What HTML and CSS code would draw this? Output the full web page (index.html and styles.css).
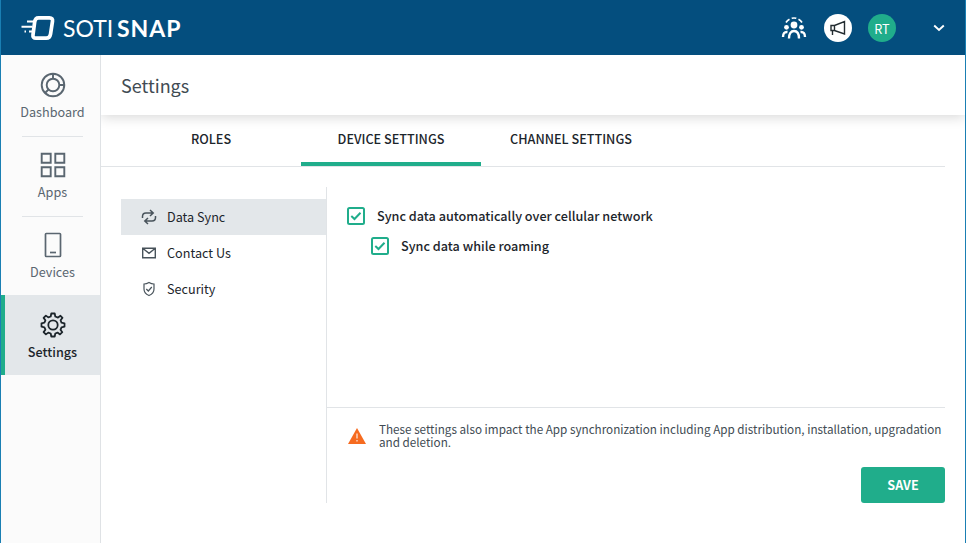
FILE: index.html
```html
<!DOCTYPE html>
<html lang="en">
<head>
<meta charset="utf-8">
<title>SOTI Snap – Settings</title>
<link rel="stylesheet" href="styles.css">
</head>
<body>
<div class="app">
  <header class="topbar">
    <div class="brand">
      <svg class="brand-mark" width="34" height="26" viewBox="0 0 34 26" fill="none" stroke="#fff">
        <path d="M17.500 2.800H28.500Q32 2.800 31.500 6.300L29.500 19.200Q28.800 23.200 25.300 23.200H15Q11.500 23.200 12 19.700L13.700 6.800Q14.200 2.800 17.500 2.800Z" stroke-width="3.700"/>
        <path d="M6 6.500H13M0.500 11.700H11.500M3.500 16.500H5M8 16.500H12" stroke-width="1.900"/>
      </svg>
      <span class="brand-thin">SOTI</span><span class="brand-bold">SNAP</span>
    </div>
    <div class="tools">
      <svg class="people" width="26" height="24" viewBox="0 0 26 24" fill="none" stroke="#fff">
        <path d="M5 6.500A9.200 9.200 0 0 1 8.500 3.300M10.700 2.300A9 9 0 0 1 15.300 2.300M17.500 3.300A9.200 9.200 0 0 1 21 6.500" stroke-width="1.700"/>
        <circle cx="13" cy="9" r="3.400" fill="#fff" stroke="none"/><circle cx="5.500" cy="11.300" r="2.400" fill="#fff" stroke="none"/><circle cx="20.500" cy="11.300" r="2.400" fill="#fff" stroke="none"/>
        <path d="M8 22.500C8 17.500 10 15 13 15S18 17.500 18 22.500M2 21C2 17.500 3.500 15.600 6.500 16M24 21C24 17.500 22.500 15.600 19.500 16" stroke-width="2.400"/>
      </svg>
      <span class="round announce"><svg width="16" height="16" viewBox="0 0 16 16" fill="none" stroke="#222b30" stroke-width="1.400"><path d="M1 5.500H4.500L14.500 1.500V14L4.500 10.500H1ZM4.500 5.500V10.500M2.500 10.500V15"/></svg></span>
      <span class="round avatar">RT</span>
      <svg class="chevron" width="12" height="8" viewBox="0 0 12 8" fill="none" stroke="#fff" stroke-width="1.900"><path d="M1.200 1.500L6 6L10.800 1.500"/></svg>
    </div>
  </header>
  <div class="body">
    <nav class="rail">
      <a class="rail-item"><svg width="26" height="26" viewBox="0 0 26 26" fill="none" stroke="#5a6670" stroke-width="1.900"><circle cx="13" cy="13" r="11.300"/><circle cx="13" cy="13" r="6.300"/><path d="M13 1.700V6.700M19.300 13H24.300M8.500 17.500L5 21"/></svg><span>Dashboard</span></a>
      <a class="rail-item"><svg width="26" height="26" viewBox="0 0 26 26" fill="none" stroke="#5a6670" stroke-width="1.900"><path d="M1.700 1.700H10.700V10.700H1.700ZM15.300 1.700H24.300V10.700H15.300ZM1.700 15.300H10.700V24.300H1.700ZM15.300 15.300H24.300V24.300H15.300Z"/></svg><span>Apps</span></a>
      <a class="rail-item"><svg width="26" height="26" viewBox="0 0 26 26" fill="none" stroke="#5a6670" stroke-width="1.700"><rect x="5.500" y="1.500" width="15" height="23" rx=".8"/><path d="M10 20.500H16"/></svg><span>Devices</span></a>
      <a class="rail-item active"><svg width="26" height="26" viewBox="0 0 26 26" fill="none" stroke="#1c252b" stroke-width="1.800" stroke-linejoin="round"><circle cx="13" cy="13" r="4.700"/><path d="M11.300 1.500H14.700L15.300 4.500L18 5.600L20.500 3.800L22.500 5.800L20.600 8.300L21.500 10.700L24.500 11.300V14.700L21.500 15.300L20.500 17.800L22.300 20.200L20 22.400L17.500 20.600L15.300 21.500L14.700 24.500H11.300L10.700 21.500L8.300 20.600L5.900 22.400L3.600 20.100L5.400 17.700L4.400 15.300L1.500 14.700V11.300L4.400 10.700L5.400 8.300L3.600 5.900L5.900 3.600L8.300 5.400L10.700 4.500Z"/></svg><span>Settings</span></a>
    </nav>
    <main class="main">
      <h1 class="title">Settings</h1>
      <div class="tabs"><a class="tab">ROLES</a><a class="tab selected">DEVICE SETTINGS</a><a class="tab">CHANNEL SETTINGS</a></div>
      <div class="content">
        <div class="submenu">
          <a class="sub current"><svg width="16" height="16" viewBox="0 0 16 16" fill="none" stroke="#48535b" stroke-width="1.500"><path d="M1.500 9V7.500Q1.500 4 5 4H11.500M9 1L12.200 4L9 7M14.500 7V8.500Q14.500 12 11 12H4.500M7 9L3.800 12L7 15"/></svg><span>Data Sync</span></a>
          <a class="sub"><svg width="16" height="16" viewBox="0 0 16 16" fill="none" stroke="#48535b" stroke-width="1.400"><path d="M1.700 3.200H14.300V12.800H1.700ZM2 3.500L8 8.300L14 3.500"/></svg><span>Contact Us</span></a>
          <a class="sub"><svg width="16" height="16" viewBox="0 0 16 16" fill="none" stroke="#48535b" stroke-width="1.200"><path d="M8 1.500Q10.500 3 13 3V8Q13 12.500 8 14.500Q3 12.500 3 8V3Q5.500 3 8 1.500ZM5.300 8L7.300 10L10.800 6"/></svg><span>Security</span></a>
        </div>
        <div class="panel">
          <div class="options">
            <label class="option"><svg width="18" height="18" viewBox="0 0 18 18" fill="none" stroke="#20ad8b" stroke-width="2"><rect x="1" y="1" width="16" height="16" rx="1.500"/><path d="M4.300 9L7.500 12L13.500 5.800"/></svg><span>Sync data automatically over cellular network</span></label>
            <label class="option child"><svg width="18" height="18" viewBox="0 0 18 18" fill="none" stroke="#20ad8b" stroke-width="2"><rect x="1" y="1" width="16" height="16" rx="1.500"/><path d="M4.300 9L7.500 12L13.500 5.800"/></svg><span>Sync data while roaming</span></label>
          </div>
          <div class="notice"><svg width="18" height="16" viewBox="0 0 18 16"><path d="M9 0L18 16H0Z" fill="#f66b20"/><path d="M9 5.500V10.500M9 12V13.500" stroke="#fbd3bd" stroke-width="1.500"/></svg><p>These settings also impact the App synchronization including App distribution, installation, upgradation<br>and deletion.</p></div>
          <button class="save">SAVE</button>
        </div>
      </div>
    </main>
  </div>
</div>
</body>
</html>
```
FILE: styles.css
```css
* { box-sizing: border-box; }
body { margin: 0; font-family: "Noto Sans CJK SC", "Noto Sans", sans-serif; font-size: 12.65px; color: #1c252b; background: #fff; }
svg { flex: none; display: block; }
.app { width: 966px; height: 543px; border: solid #1a7fb3; border-width: 0 1px; display: flex; flex-direction: column; overflow: hidden; }
.topbar { height: 55px; flex: none; background: #044e7e; color: #fff; display: flex; justify-content: space-between; align-items: center; padding: 0 20px; }
.brand { display: flex; align-items: center; font-family: Lato, sans-serif; font-size: 23px; line-height: 26px; }
.brand-mark { margin-right: 8px; }
.brand-thin { font-weight: 400; width: 54px; letter-spacing: 0; }
.brand-bold { font-weight: 700; letter-spacing: 1px; }
.tools { display: flex; align-items: center; }
.people { margin-right: 17px; }
.round { width: 28px; height: 28px; border-radius: 50%; display: flex; align-items: center; justify-content: center; margin-right: 16px; }
.announce { background: #fff; }
.avatar { background: #20ad8b; margin-right: 37px; padding-top: 1px; }
.body { flex: 1; display: flex; min-height: 0; }
.rail { width: 100px; flex: none; background: #fbfbfb; border-right: 1px solid #dfe2e5; padding-top: 2px; }
.rail-item { height: 80px; display: flex; flex-direction: column; align-items: center; padding: 15px 0 0 4px; color: #5a6670; background: linear-gradient(#e1e4e7, #e1e4e7) 21px 100% / 61px 1px no-repeat; }
.rail-item span { line-height: 20px; margin-top: 4px; }
.rail-item:nth-child(3) { background: none; height: 78px; }
.rail-item.active { background: #e3e7ea; border-left: 4px solid #20ad8b; padding: 17px 0 0; color: #1c252b; font-weight: 500; }
.main { flex: 1; min-width: 0; display: flex; flex-direction: column; }
.title { margin: 0; height: 60px; flex: none; padding: 0 20px; font-size: 18px; font-weight: 400; line-height: 60px; color: #414b53; box-shadow: 0 2px 12px rgba(0,0,0,.16); clip-path: inset(0 0 -20px 0); }
.tabs { height: 52px; flex: none; margin-right: 20px; padding-left: 20px; border-bottom: 1px solid #e1e4e7; display: flex; }
.tab { width: 180px; height: 51px; text-align: center; line-height: 48px; font-weight: 500; }
.tab.selected { border-bottom: 4px solid #20ad8b; }
.content { display: flex; margin: 20px 20px 0; height: 316px; }
.submenu { width: 206px; flex: none; padding-top: 12px; border-right: 1px solid #e1e4e7; }
.sub { display: flex; align-items: center; height: 36px; gap: 10px; padding-left: 20px; }
.sub span, .option span { line-height: 18px; }
.sub.current { background: #e3e7ea; }
.panel { flex: 1; min-width: 0; display: flex; flex-direction: column; }
.options { height: 221px; flex: none; padding: 20px 20px 0; border-bottom: 1px solid #e1e4e7; }
.option { display: flex; align-items: center; height: 18px; gap: 12px; margin-bottom: 12px; font-weight: 500; white-space: nowrap; }
.option.child { margin-left: 24px; }
.notice { display: flex; gap: 13px; padding: 14px 0 0 21px; }
.notice svg { margin-top: 6px; }
.notice p { margin: 0; font-size: 11.7px; line-height: 13px; color: #414b53; white-space: nowrap; }
.save { width: 84px; height: 36px; border: 0; border-radius: 3px; background: #20ad8b; color: #fff; font: 700 12.63px/36px "Noto Sans CJK SC", sans-serif; padding: 0; margin: auto 0 0 auto; }
```
